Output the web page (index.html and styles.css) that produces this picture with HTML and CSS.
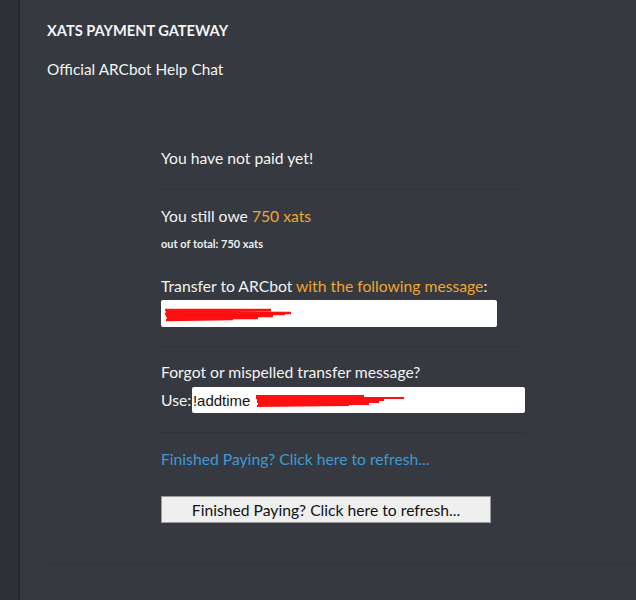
FILE: index.html
```html
<!DOCTYPE html>
<html>
<head>
<meta charset="utf-8">
<link rel="stylesheet" href="styles.css">
</head>
<body>
<div class="app">
  <div class="sidebar"></div>
  <main class="main">
    <h1 class="title">XATS PAYMENT GATEWAY</h1>
    <div class="subtitle">Official ARCbot Help Chat</div>
    <section class="panel">
      <div class="block first">
        <p class="line">You have not paid yet!</p>
      </div>
      <div class="block owe">
        <p class="line">You still owe <span class="orange">750 xats</span></p>
        <p class="small">out of total: 750 xats</p>
        <p class="line transfer">Transfer to ARCbot <span class="orange">with the following message</span>:</p>
        <div class="field wide">
          <svg class="scribble" width="140" height="16" viewBox="0 0 140 16">
            <path d="M2 4 L108 4 M3 6 L128 7 M2 8 L122 8 M3 10 L110 10 M4 12 L95 12 M3 14 L70 13" stroke="#ff1010" stroke-width="2.4" fill="none"/>
          </svg>
        </div>
      </div>
      <div class="block forgot">
        <p class="line">Forgot or mispelled transfer message?</p>
        <div class="use-row">
          <span class="use">Use:</span>
          <div class="field cmd"><span class="cmd-text">!addtime</span>
            <svg class="scribble inline" width="160" height="16" viewBox="0 0 160 16">
              <path d="M2 4 L110 4 M2 6 L150 6 M3 8 L130 8 M3 10 L125 10 M4 12 L115 12 M3 14 L95 13" stroke="#ff1010" stroke-width="2.2" fill="none"/>
            </svg>
          </div>
        </div>
      </div>
      <div class="block last">
        <a class="link" href="#">Finished Paying? Click here to refresh...</a>
        <button class="btn" type="button">Finished Paying? Click here to refresh...</button>
      </div>
    </section>
    <div class="bottom-rule"></div>
  </main>
</div>
</body>
</html>
```
FILE: styles.css
```css
html, body {
  margin: 0;
  padding: 0;
  background: #36393f;
}
body {
  font-family: Lato, "Noto Sans", sans-serif;
  color: #ffffff;
}
.app {
  display: flex;
  height: 600px;
  overflow: hidden;
}
.sidebar {
  width: 18px;
  flex: none;
  background: #2f3136;
  border-right: 2px solid #26282d;
}
.main {
  flex: 1;
  padding: 22px 0 0 27px;
  display: flex;
  flex-direction: column;
}
.title {
  margin: 0;
  font-size: 14.6px;
  font-weight: 700;
  line-height: 18px;
  color: #f3f4f5;
}
.subtitle {
  margin-top: 20px;
  font-size: 15.4px;
  line-height: 18px;
  color: #f3f4f5;
}
.panel {
  margin: 71px 0 0 114px;
  width: 364px;
}
.block {
  border-top: 1px solid #30333a;
  padding: 17px 0 19px;
}
.block.first {
  border-top: none;
  padding: 0 0 22px;
}
.block.owe {
  padding-top: 17px;
}
.block.forgot {
  padding-top: 16px;
}
.line {
  margin: 0;
  font-size: 15.7px;
  line-height: 18px;
  color: #f3f4f5;
}
.line.transfer {
  margin-top: 27px;
}
.orange {
  color: #f0a731;
}
.small {
  margin: 12px 0 0;
  font-size: 11px;
  font-weight: 700;
  line-height: 13px;
  color: #eceeef;
}
.field {
  background: #ffffff;
  border-radius: 2px;
  display: flex;
  align-items: center;
  color: #111;
  font-family: "Liberation Sans", Arial, sans-serif;
  font-size: 15px;
}
.field.wide {
  margin-top: 5px;
  width: 336px;
  height: 27px;
}
.scribble {
  display: block;
  margin-left: 2px;
}
.use-row {
  display: flex;
  align-items: center;
  margin-top: 6px;
}
.use {
  font-size: 15.7px;
  line-height: 18px;
  color: #f3f4f5;
  width: 31px;
}
.field.cmd {
  width: 334px;
  height: 26px;
}
.cmd-text {
  padding-left: 1px;
}
.scribble.inline {
  margin-left: 4px;
}
.block.last {
  display: flex;
  flex-direction: column;
  align-items: flex-start;
}
.link {
  font-size: 15.7px;
  line-height: 18px;
  color: #3e9ad6;
  text-decoration: none;
}
.btn {
  margin-top: 28px;
  width: 330px;
  height: 27px;
  background: #efefef;
  border: 1px solid #9a9a9a;
  border-radius: 0;
  font-family: Lato, "Noto Sans", sans-serif;
  font-size: 15.7px;
  color: #111;
  padding: 0;
}
.bottom-rule {
  margin-top: 22px;
  border-top: 1px solid #30333a;
}
```
